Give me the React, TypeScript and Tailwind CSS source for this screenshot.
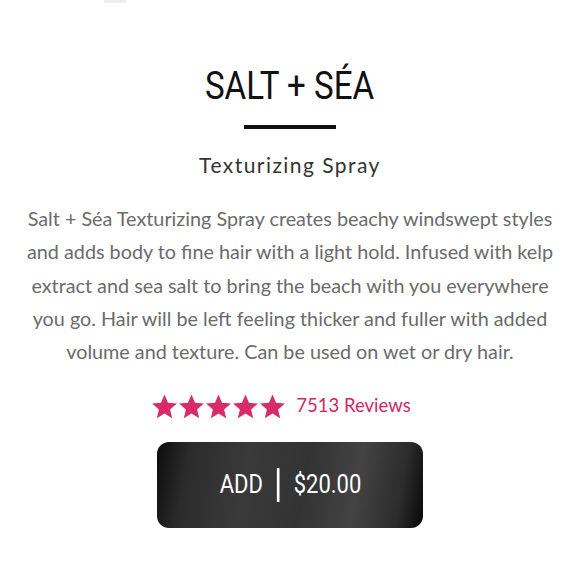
import React from "react";

const Star = () => (
  <svg viewBox="0 0 24 24" width="27" height="27" className="shrink-0">
    <path
      d="M12 1.4l3.1 7.3 7.9.7-6 5.2 1.8 7.8L12 18.3l-6.8 4.1 1.8-7.8-6-5.2 7.9-.7z"
      fill="#d92b65"
    />
  </svg>
);

export default function App() {
  return (
    <div className="relative w-[580px] h-[580px] bg-white overflow-hidden">
      <div className="absolute left-[104px] top-0 w-[22px] h-[3px] bg-[#eceef2]" />
      <div className="flex flex-col items-center pt-[62px]">
        <h1
          className="text-[39px] leading-[48px] text-[#111] scale-x-[0.85]"
          style={{ fontFamily: "Roboto, sans-serif" }}
        >
          SALT + SÉA
        </h1>
        <div className="mt-[15px] w-[92px] h-[4px] bg-[#111]" />
        <h2
          className="mt-[22px] text-[21px] leading-[28px] text-[#333] tracking-[1.45px]"
          style={{ fontFamily: "Lato, sans-serif" }}
        >
          Texturizing Spray
        </h2>
        <p
          className="mt-[23px] w-[560px] text-center text-[19.8px] leading-[33.25px] text-[#6b6b6b]"
          style={{ fontFamily: "Lato, sans-serif" }}
        >
          Salt + Séa Texturizing Spray creates beachy windswept styles
          <br />
          and adds body to fine hair with a light hold. Infused with kelp
          <br />
          extract and sea salt to bring the beach with you everywhere
          <br />
          you go. Hair will be left feeling thicker and fuller with added
          <br />
          volume and texture. Can be used on wet or dry hair.
        </p>
        <div className="mt-[24px] flex items-center pr-[18px]">
          <div className="flex">
            <Star />
            <Star />
            <Star />
            <Star />
            <Star />
          </div>
          <span
            className="ml-[10px] text-[18.5px] text-[#d02a62]"
            style={{ fontFamily: "Lato, sans-serif" }}
          >
            7513 Reviews
          </span>
        </div>
        <button
          className="mt-[22px] w-[266px] h-[86px] rounded-[12px] flex items-center justify-center text-white text-[25px] bg-[linear-gradient(100deg,#0c0c0c_0%,#2b2b2b_12%,#3a3a3a_33%,#333333_55%,#434343_74%,#2c2c2c_90%,#080808_100%)]"
          style={{ fontFamily: "Roboto, sans-serif" }}
        >
          <span className="flex items-center gap-[16px] scale-x-[0.88]">
            <span>ADD</span>
            <span className="w-[3px] h-[34px] bg-white" />
            <span>$20.00</span>
          </span>
        </button>
      </div>
    </div>
  );
}
